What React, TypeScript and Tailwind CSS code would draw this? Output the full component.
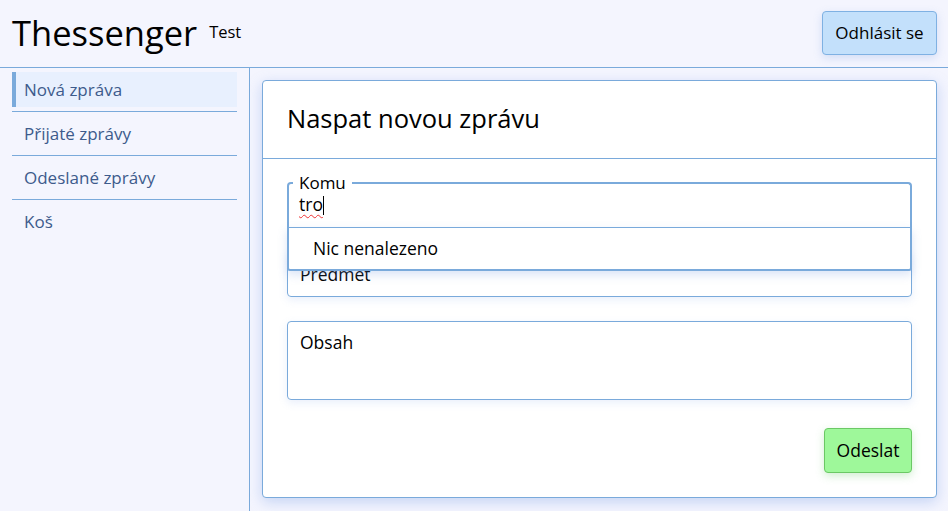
import React from 'react';

const NAV = ['Nová zpráva', 'Přijaté zprávy', 'Odeslané zprávy', 'Koš'];

export default function App() {
  return (
    <div
      className="h-[511px] w-[948px] overflow-hidden bg-[#f4f5fe] text-black flex flex-col"
      style={{ fontFamily: '"Open Sans", "DejaVu Sans", sans-serif' }}
    >
      {/* header */}
      <header className="h-[68px] shrink-0 flex items-center justify-between pl-3 pr-[11px] border-b border-[#7aaadb]">
        <div className="flex items-baseline gap-3 -mt-[1px]">
          <span className="text-[34.5px] leading-none">Thessenger</span>
          <span className="text-[16.5px] leading-none relative -top-[8px]">Test</span>
        </div>
        <button className="h-[44px] w-[115px] -mt-[1px] rounded-[4px] border border-[#7fb1e3] bg-[#c3e0fb] text-[17px] shadow-[0_3px_8px_rgba(110,150,220,0.25)]">
          Odhlásit se
        </button>
      </header>

      <div className="flex flex-1 min-h-0">
        {/* sidebar */}
        <aside className="w-[250px] shrink-0 border-r border-[#7aaadb] px-3">
          {NAV.map((item, i) => (
            <div
              key={item}
              className={i < NAV.length - 1 ? 'h-[44px] py-1 border-b border-[#7aaadb]' : 'h-[44px] py-1'}
            >
              <div
                className={
                  i === 0
                    ? 'h-[35px] flex items-center pl-2 border-l-4 border-[#7aaadb] bg-[#e8f0fe] text-[#3d5b8c] text-[17px]'
                    : 'h-[35px] flex items-center pl-3 text-[#3d5b8c] text-[17px]'
                }
              >
                {item}
              </div>
            </div>
          ))}
        </aside>

        {/* main */}
        <main className="flex-1 pt-3 pl-3 pr-[11px]">
          <div className="h-[418px] rounded-[4px] border border-[#7aaadb] bg-white shadow-[0_4px_14px_rgba(110,150,225,0.35)] flex flex-col">
            <div className="h-[78px] shrink-0 border-b border-[#7aaadb] flex items-center px-6">
              <h2 className="text-[25.5px] leading-none -mt-[1px]">Naspat novou zprávu</h2>
            </div>

            <div className="px-6 pt-[23px] flex flex-col">
              {/* Komu (focused, with suggestion list) */}
              <div className="relative z-10 h-[45px]">
                <fieldset className="h-[53px] -mt-[8px] rounded-t-[4px] border-2 border-b-0 border-[#7aaadb] pl-[4px] pr-[10px]">
                  <legend className="px-[6px] text-[17px] leading-[18px]">Komu</legend>
                  <div className="pl-[6px] text-[17.5px] leading-[20px] mt-[2px]">
                    <span className="underline decoration-wavy decoration-[#e33] decoration-1 underline-offset-[3px]">tro</span>
                    <span className="inline-block w-px h-[19px] bg-black align-[-4px]" />
                  </div>
                </fieldset>
                <div className="absolute left-0 right-0 top-full h-[44px] rounded-b-[3px] border-2 border-t border-[#7aaadb] bg-white flex items-center pl-6 text-[17.5px] shadow-[0_4px_10px_rgba(110,150,225,0.25)]">
                  Nic nenalezeno
                </div>
              </div>

              {/* Předmět */}
              <div className="mt-[24px] h-[46px] rounded-[4px] border border-[#7aaadb] px-3 flex items-center text-[17.5px] shadow-[0_3px_8px_rgba(110,150,225,0.15)]">
                Předmět
              </div>

              {/* Obsah */}
              <div className="mt-[24px] h-[79px] rounded-[4px] border border-[#7aaadb] px-3 pt-[7px] text-[17.5px] shadow-[0_3px_8px_rgba(110,150,225,0.15)]">
                Obsah
              </div>

              <div className="mt-[28px] flex justify-end">
                <button className="h-[45px] w-[88px] rounded-[4px] border border-[#6bc865] bg-[#9ef89a] text-[17.5px] shadow-[0_3px_8px_rgba(100,200,100,0.3)]">
                  Odeslat
                </button>
              </div>
            </div>
          </div>
        </main>
      </div>
    </div>
  );
}
